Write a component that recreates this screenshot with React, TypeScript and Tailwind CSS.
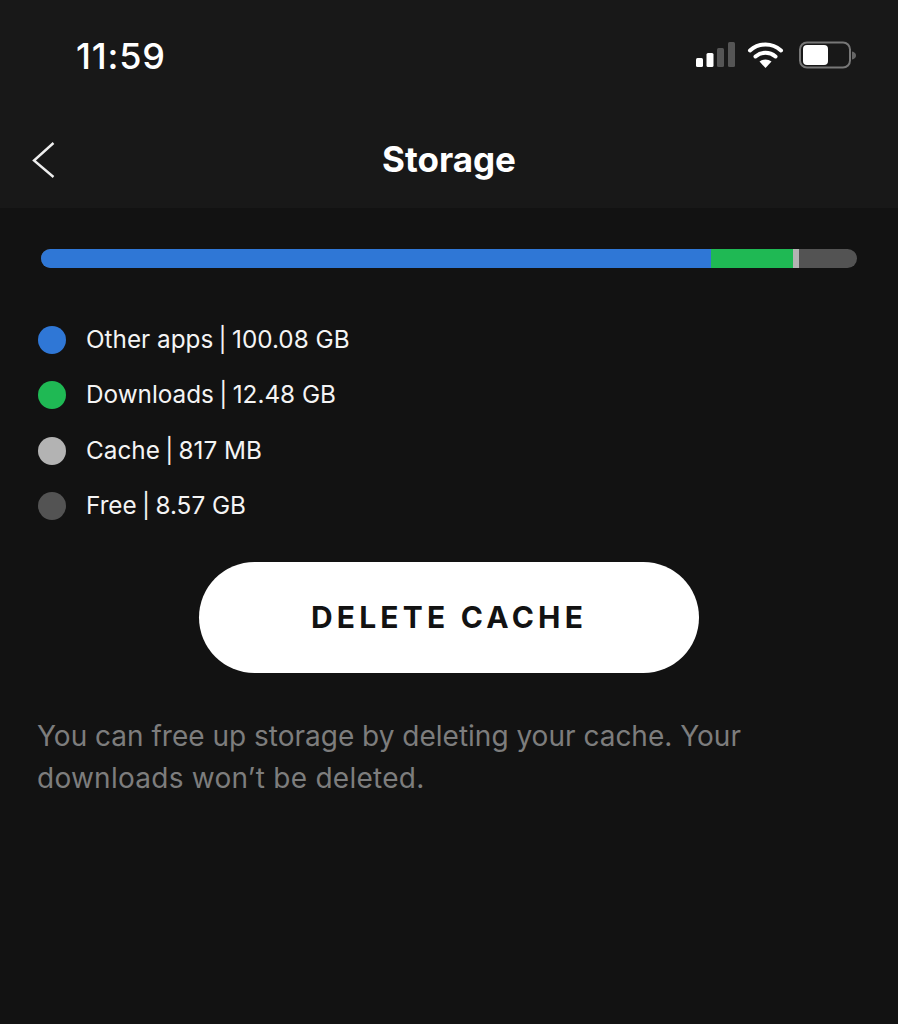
const legend = [
  { name: "Other apps", value: "100.08 GB", color: "bg-[#2f77d6]" },
  { name: "Downloads", value: "12.48 GB", color: "bg-[#1fb954]" },
  { name: "Cache", value: "817 MB", color: "bg-[#b3b3b3]" },
  { name: "Free", value: "8.57 GB", color: "bg-[#535353]" },
];

const StatusIcons = () => (
  <svg width="162" height="32" viewBox="0 0 162 32" fill="none">
    {/* signal bars */}
    <rect x="0" y="17" width="7" height="9" rx="1.5" fill="#fff" />
    <rect x="10.5" y="12" width="7" height="14" rx="1.5" fill="#fff" />
    <rect x="21" y="7" width="7" height="19" rx="1.5" fill="#555" />
    <rect x="32" y="1" width="7" height="25" rx="1.5" fill="#555" />
    {/* wifi */}
    <path d="M54 9.5C63 1.5 76 1.5 85 9.5" stroke="#fff" strokeWidth="4" strokeLinecap="round" />
    <path d="M59.5 15.5C65.5 10.5 73.5 10.5 79.5 15.5" stroke="#fff" strokeWidth="4" strokeLinecap="round" />
    <path d="M69.5 27L63.5 20.5C67 17.8 72 17.8 75.5 20.5Z" fill="#fff" />
    {/* battery */}
    <rect x="104" y="1.5" width="50" height="25" rx="7" stroke="#777" strokeWidth="2" />
    <rect x="107" y="4" width="25" height="20" rx="4" fill="#fff" />
    <path d="M156 10.5C158.5 11 160 12.5 160 14.5C160 16.5 158.5 18 156 18.5Z" fill="#666" />
  </svg>
);

export default function App() {
  return (
    <div className="h-[1024px] w-[898px] overflow-hidden bg-[#121212] font-['Inter','Liberation_Sans',sans-serif] text-white">
      <header className="h-[208px] bg-[#181818]">
        <div className="flex h-[110px] items-start justify-between pl-[76px] pr-[40px] pt-[34px]">
          <span className="text-[36px] leading-[44px] font-medium tracking-[0.8px]">11:59</span>
          <div className="pt-[7px]">
            <StatusIcons />
          </div>
        </div>
        <div className="relative flex h-[98px] items-start justify-center pt-[29px]">
          <svg className="absolute left-[32px] top-[31px]" width="24" height="38" viewBox="0 0 24 38" fill="none">
            <path d="M21.5 2L2 19.5L21.5 36" stroke="#eee" strokeWidth="2.4" />
          </svg>
          <h1 className="text-[35px] leading-[40px] font-bold">Storage</h1>
        </div>
      </header>

      <main className="pl-[38px] pr-[41px] pt-[41px]">
        <div className="ml-[3px] flex h-[19px] w-[816px] overflow-hidden rounded-full bg-[#535353]">
          <div className="w-[670px] bg-[#2f77d6]" />
          <div className="w-[82px] bg-[#1fb954]" />
          <div className="w-[6px] bg-[#b3b3b3]" />
        </div>

        <ul className="mt-[58px] flex flex-col gap-[27.3px]">
          {legend.map((item) => (
            <li key={item.name} className="flex h-[28px] items-center gap-[20px]">
              <span className={`h-[28px] w-[28px] rounded-full ${item.color}`} />
              <span className="-translate-y-px text-[24.3px] leading-[28px] text-[#f4f4f4]">
                {item.name}
                <span className="mx-[-1.5px]"> | </span>
                {item.value}
              </span>
            </li>
          ))}
        </ul>

        <button className="ml-[161px] mt-[42px] flex h-[111px] w-[500px] items-center justify-center rounded-full bg-white text-[30px] font-bold tracking-[4.2px] text-[#121212]">
          DELETE CACHE
        </button>

        <p className="mt-[42px] -translate-x-px text-[28px] leading-[42px] text-[#7d7d7d]">
          You can free up storage by deleting your cache. Your
          <br />
          <span className="tracking-[0.26px]">downloads won’t be deleted.</span>
        </p>
      </main>
    </div>
  );
}
